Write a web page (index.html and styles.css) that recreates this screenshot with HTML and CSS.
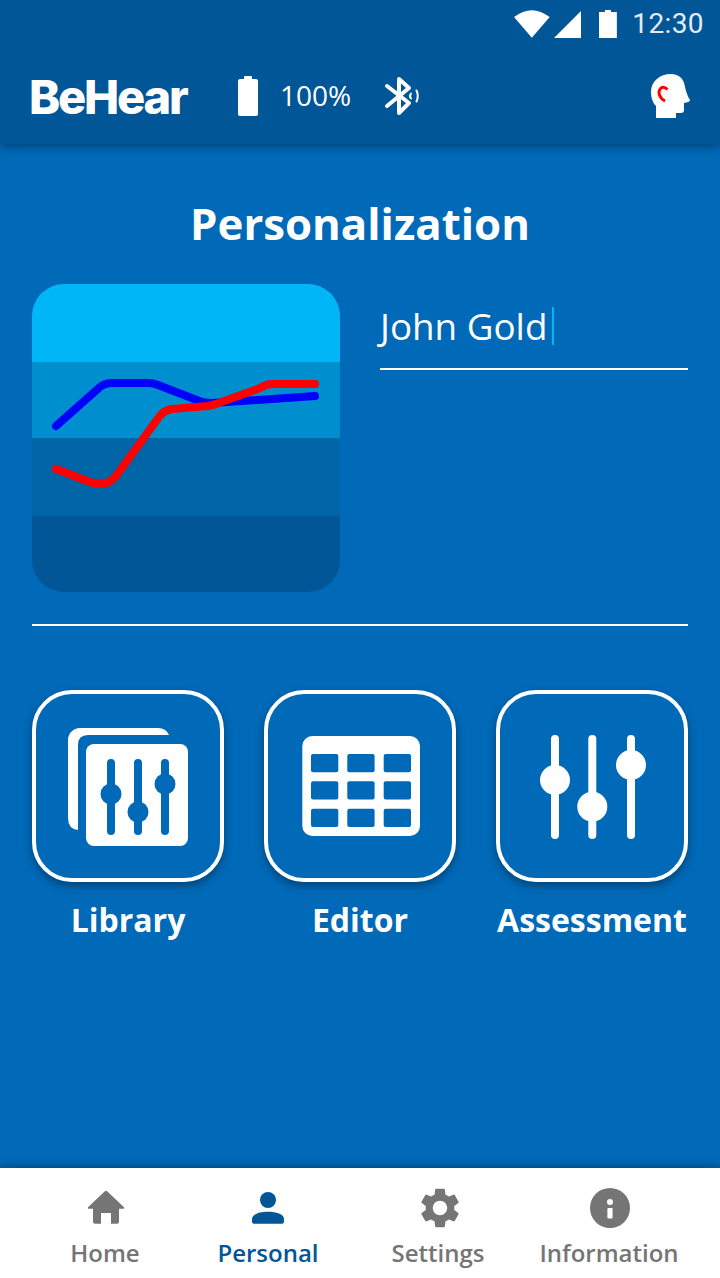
FILE: index.html
```html
<!DOCTYPE html>
<html lang="en">
<head>
    <meta charset="UTF-8">
    <meta name="viewport" content="width=device-width, initial-scale=1.0">
    <title>Personalization</title>
    <link rel="stylesheet" href="styles.css">
</head>
<body>
    <header class="appbar">
        <div class="statusbar">
            <svg class="status-wifi" width="36" height="28" viewBox="0 0 36 28"><path d="M0 7Q18 -7 36 7L18 28Z"/></svg>
            <svg class="status-signal" width="28" height="28" viewBox="0 0 28 28"><path d="M0 28L28 0V28Z"/></svg>
            <svg class="status-battery" width="18" height="28" viewBox="0 0 18 28"><path d="M6 0H12V2H18V28H0V2H6Z"/></svg>
            <span class="status-time">12:30</span>
        </div>
        <div class="toolbar">
            <span class="logo">BeHear</span>
            <svg class="battery" width="20" height="40" viewBox="0 0 20 40"><path d="M6 1Q6 0 7 0H13Q14 0 14 1V3H18Q20 3 20 5V38Q20 40 18 40H2Q0 40 0 38V5Q0 3 2 3H6Z"/></svg>
            <span class="percent">100%</span>
            <svg class="bluetooth" width="36" height="40" viewBox="0 0 36 40">
                <path d="M3 10L25 27L15 37V3L25 12L3 30" fill="none" stroke="#fff" stroke-width="4" stroke-linecap="round" stroke-linejoin="round"/>
                <path d="M27 17.500Q25 20 27 22.500" fill="none" stroke="#fff" stroke-width="2" stroke-linecap="round"/>
                <path d="M32.500 14.500Q35 20 32.500 25.500" fill="none" stroke="#fff" stroke-width="2" stroke-linecap="round"/>
            </svg>
            <svg class="head" width="40" height="44" viewBox="0 0 40 44">
                <path d="M5 44V32C1 28 0 22 0 18C0 7 9 0 20 0C28 0 33 5 34 13C35 18 37 23 39 26C39 28 36 28 33 29V36Q33 39 30 39H25V44Z" fill="#fff"/>
                <path d="M16.500 15.500Q13 12 10 14Q7 17 8.500 21Q10 25 14 27" fill="none" stroke="#f00" stroke-width="3"/>
            </svg>
        </div>
    </header>

    <main class="content">
        <h1 class="title">Personalization</h1>

        <section class="profile">
            <div class="chart">
                <svg width="308" height="308" viewBox="0 0 308 308">
                    <rect width="308" height="78" fill="#00b6f6"/>
                    <rect y="78" width="308" height="76" fill="#008fce"/>
                    <rect y="154" width="308" height="78" fill="#0065a6"/>
                    <rect y="232" width="308" height="76" fill="#005696"/>
                    <path d="M24 142L68 103Q73 99 80 99H116Q121 99 126 101L170 118Q175 119 180 119L283 112" fill="none" stroke="#00f" stroke-width="8" stroke-linecap="round" stroke-linejoin="round"/>
                    <path d="M24 185L58 198Q74 204 84 192L127 133Q132 126 140 125L176 122Q180 121 184 120L228 104Q234 100 240 100H283" fill="none" stroke="#f00" stroke-width="8" stroke-linecap="round" stroke-linejoin="round"/>
                </svg>
            </div>
            <div class="name-field">
                <span class="name">John Gold</span><span class="caret"></span>
            </div>
        </section>

        <hr class="divider">

        <section class="tools">
            <div class="tool">
                <div class="tool-box">
                    <svg width="184" height="184" viewBox="0 0 184 184">
                        <path d="M32 46A12 12 0 0 1 44 34H122Q130 34 133 41H52Q42 41 42 51V136Q32 135 32 124Z" fill="#fff"/>
                        <rect x="50" y="50" width="102" height="102" rx="8" fill="#fff"/>
                        <g stroke="#0069b8" stroke-width="8" stroke-linecap="round">
                            <path d="M75 69V137M102 69V137M129 69V137"/>
                        </g>
                        <g fill="#0069b8">
                            <circle cx="75" cy="100" r="10.500"/>
                            <circle cx="102" cy="118" r="10.500"/>
                            <circle cx="129" cy="90" r="10.500"/>
                        </g>
                    </svg>
                </div>
                <span class="tool-label">Library</span>
            </div>
            <div class="tool">
                <div class="tool-box">
                    <svg width="184" height="184" viewBox="0 0 184 184">
                        <rect x="34.300" y="42" width="117.700" height="100" rx="10" fill="#fff"/>
                        <g fill="#0069b8">
                            <rect x="43" y="60" width="27.300" height="18.300" rx="2"/>
                            <rect x="79.300" y="60" width="27.300" height="18.300" rx="2"/>
                            <rect x="115.700" y="60" width="27.300" height="18.300" rx="2"/>
                            <rect x="43" y="87.300" width="27.300" height="18.300" rx="2"/>
                            <rect x="79.300" y="87.300" width="27.300" height="18.300" rx="2"/>
                            <rect x="115.700" y="87.300" width="27.300" height="18.300" rx="2"/>
                            <rect x="43" y="114.700" width="27.300" height="18.300" rx="2"/>
                            <rect x="79.300" y="114.700" width="27.300" height="18.300" rx="2"/>
                            <rect x="115.700" y="114.700" width="27.300" height="18.300" rx="2"/>
                        </g>
                    </svg>
                </div>
                <span class="tool-label">Editor</span>
            </div>
            <div class="tool">
                <div class="tool-box">
                    <svg width="184" height="184" viewBox="0 0 184 184">
                        <path d="M55 45V141M92.300 45V141M131 45V141" stroke="#fff" stroke-width="8" stroke-linecap="round"/>
                        <g fill="#fff">
                            <circle cx="55" cy="86" r="15"/>
                            <circle cx="92.300" cy="112.700" r="15"/>
                            <circle cx="131" cy="71" r="15"/>
                        </g>
                    </svg>
                </div>
                <span class="tool-label">Assessment</span>
            </div>
        </section>
    </main>

    <nav class="tabbar">
        <a class="tab">
            <svg class="icon-home" width="48" height="48" viewBox="0 0 24 24"><path d="M11.300 3.700Q12 3.100 12.700 3.700L21 11.600Q21.300 12.200 20.800 12.400H18.500V18.900Q18.500 19.900 17.500 19.900H14.500V14.500H9.500V19.900H6.500Q5.500 19.900 5.500 18.900V12.400H3.200Q2.700 12.200 3 11.600Z"/></svg>
            <span>Home</span>
        </a>
        <a class="tab active">
            <svg width="48" height="48" viewBox="0 0 24 24"><circle cx="12" cy="8" r="4"/><path d="M4 17.500C4 15 8 13.850 12 13.850S20 15 20 17.500V18.850Q20 19.850 19 19.850H5Q4 19.850 4 18.850Z"/></svg>
            <span>Personal</span>
        </a>
        <a class="tab">
            <svg class="icon-settings" width="48" height="48" viewBox="0 0 24 24"><path d="M19.140 12.940c.04-.3.06-.61.06-.94 0-.32-.02-.64-.07-.94l2.030-1.580c.18-.14.23-.41.12-.61l-1.920-3.320c-.12-.22-.37-.29-.59-.22l-2.390.96c-.5-.38-1.030-.7-1.620-.94l-.36-2.540c-.04-.24-.24-.41-.48-.41h-3.840c-.24 0-.43.17-.47.41l-.36 2.540c-.59.24-1.130.57-1.620.94l-2.390-.96c-.22-.08-.47 0-.59.22L2.740 8.870c-.12.21-.08.47.12.61l2.030 1.580c-.05.3-.09.63-.09.94s.02.64.07.94l-2.030 1.580c-.18.14-.23.41-.12.61l1.920 3.320c.12.22.37.29.59.22l2.390-.96c.5.38 1.030.7 1.620.94l.36 2.540c.05.24.24.41.48.41h3.840c.24 0 .44-.17.47-.41l.36-2.540c.59-.24 1.130-.56 1.620-.94l2.390.96c.22.08.47 0 .59-.22l1.920-3.320c.12-.22.07-.47-.12-.61l-2.010-1.580zM12 15.600c-1.980 0-3.600-1.620-3.600-3.600s1.620-3.600 3.600-3.600 3.600 1.620 3.600 3.600-1.620 3.600-3.600 3.600z"/></svg>
            <span>Settings</span>
        </a>
        <a class="tab">
            <svg class="icon-info" width="48" height="48" viewBox="0 0 24 24"><path fill-rule="evenodd" d="M12 2A10 10 0 1 0 12 22A10 10 0 1 0 12 2ZM12 7.500A1.500 1.500 0 1 1 12 10.500A1.500 1.500 0 1 1 12 7.500ZM10.700 12.500Q10.700 12 11.200 12H12.800Q13.300 12 13.300 12.500V16.700Q13.300 17.200 12.800 17.200H11.200Q10.700 17.200 10.700 16.700Z"/></svg>
            <span>Information</span>
        </a>
    </nav>
</body>
</html>
```

FILE: styles.css
```css
* {
    margin: 0;
    padding: 0;
    box-sizing: border-box;
}
body {
    width: 720px;
    height: 1278px;
    display: flex;
    flex-direction: column;
    overflow: hidden;
    background-color: #0069b8;
    font-family: "Open Sans", Arial, sans-serif;
    color: #fff;
}

/* top bars */
.appbar {
    height: 144px;
    flex-shrink: 0;
    background-color: #005696;
    box-shadow: 0 2px 10px rgba(0, 0, 0, .4);
    position: relative;
}
.statusbar {
    height: 48px;
    display: flex;
    align-items: flex-start;
    padding: 10px 16px 0 514px;
    fill: #fff;
}
.status-signal {
    margin-left: 4px;
}
.status-battery {
    margin-left: 18px;
}
.status-time {
    margin-left: 15px;
    font-family: Roboto, Arial, sans-serif;
    font-size: 28px;
    line-height: 28px;
    letter-spacing: .4px;
    color: #e3ebf3;
}
.toolbar {
    height: 96px;
    display: flex;
    align-items: center;
    padding: 0 29px 0 32px;
    fill: #fff;
}
.logo {
    width: 206px;
    margin-left: -3px;
    margin-right: 3px;
    font-family: Inter, Arial, sans-serif;
    font-weight: 800;
    font-size: 47px;
    letter-spacing: -2.200px;
    line-height: 1;
}
.percent {
    margin-left: 22px;
    margin-bottom: 2px;
    font-size: 28px;
}
.bluetooth {
    margin-left: 33px;
}
.head {
    margin-left: auto;
}

/* main area */
.content {
    flex: 1;
    padding: 0 32px;
}
.title {
    margin-top: 51px;
    text-align: center;
    font-size: 43.750px;
    line-height: 56px;
    font-weight: 700;
}
.profile {
    margin-top: 33px;
    display: flex;
    gap: 40px;
}
.chart {
    width: 308px;
    height: 308px;
    border-radius: 32px;
    overflow: hidden;
}
.chart svg {
    display: block;
}
.name-field {
    flex: 1;
    height: 86px;
    display: flex;
    align-items: center;
    border-bottom: 2px solid #fff;
}
.name {
    font-size: 36.800px;
    line-height: 44px;
}
.caret {
    width: 2px;
    height: 38px;
    margin-left: 5px;
    background-color: #00b6f6;
}
.divider {
    margin-top: 32px;
    border: 0;
    height: 2px;
    background-color: #fff;
}
.tools {
    margin-top: 64px;
    display: flex;
    gap: 40px;
}
.tool {
    width: 192px;
    display: flex;
    flex-direction: column;
    align-items: center;
}
.tool-box {
    width: 192px;
    height: 192px;
    border: 4px solid #fff;
    border-radius: 40px;
    box-shadow: 0 4px 8px rgba(0, 0, 0, .35);
}
.tool-box svg {
    display: block;
}
.tool-label {
    margin-top: 16px;
    font-size: 32px;
    line-height: 44px;
    font-weight: 700;
    white-space: nowrap;
}

/* bottom tabs */
.tabbar {
    height: 110px;
    flex-shrink: 0;
    background-color: #fff;
    box-shadow: 0 -2px 8px rgba(0, 0, 0, .3);
    position: relative;
    display: grid;
    grid-template-columns: 162px 164px 176px 166px;
    padding: 16px 28px 0 24px;
}
.tab {
    display: flex;
    flex-direction: column;
    align-items: center;
    fill: #757575;
    color: #757575;
    font-size: 24px;
    font-weight: 600;
}
.tab svg {
    display: block;
}
.tab .icon-home,
.tab .icon-info {
    margin-left: 2px;
}
.tab .icon-settings {
    margin-left: 4px;
}
.tab span {
    line-height: 32px;
    margin-top: 5px;
}
.tab.active {
    fill: #005696;
    color: #005696;
}
```
